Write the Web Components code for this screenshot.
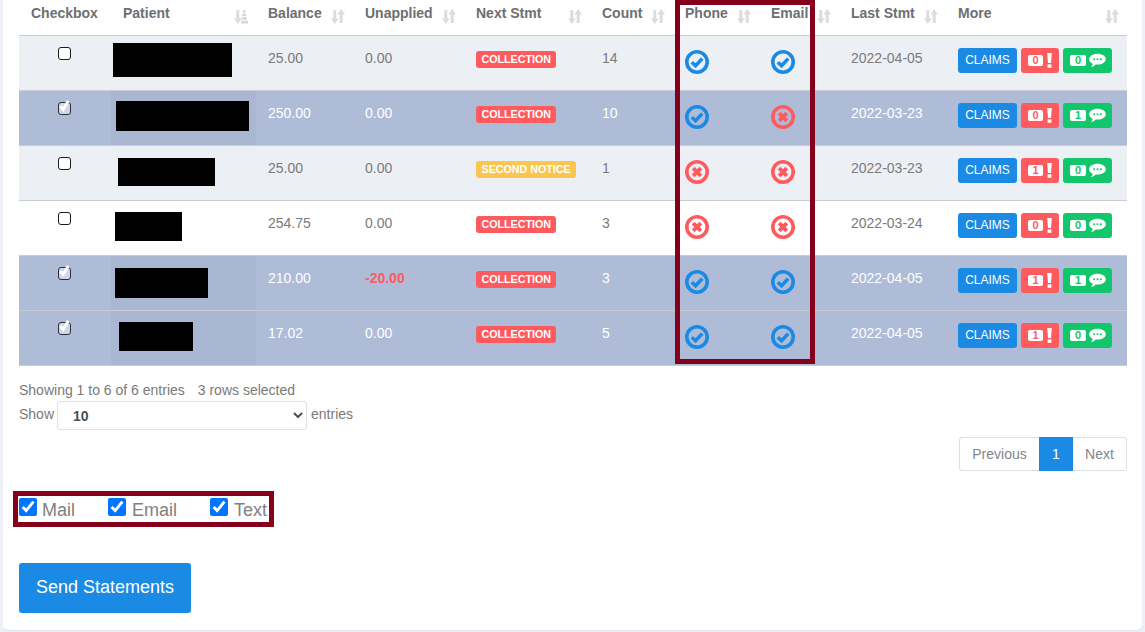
<!DOCTYPE html>
<html lang="en"><head><meta charset="utf-8"><title>Statements</title>
<style>
html,body{margin:0;height:632px;overflow:hidden;background:#edf1f7;font:14px/20px "Liberation Sans",Arial,sans-serif;color:#7a7a7a}
</style></head><body>
<x-card>
  <x-table>
    <x-row head>
      <x-head>Checkbox</x-head><x-head icon="amount">Patient</x-head><x-head icon>Balance</x-head><x-head icon>Unapplied</x-head><x-head icon>Next Stmt</x-head><x-head icon>Count</x-head><x-head icon>Phone</x-head><x-head icon>Email</x-head><x-head icon>Last Stmt</x-head><x-head icon>More</x-head>
    </x-row>
    <x-row shade>
      <x-cell center><x-tick></x-tick></x-cell><x-cell flush sorted><x-redact style="--l:2px;--t:7px;--w:119px;--h:34px"></x-redact></x-cell><x-cell>25.00</x-cell><x-cell>0.00</x-cell><x-cell><x-label>COLLECTION</x-label></x-cell><x-cell>14</x-cell><x-cell><x-status ok></x-status></x-cell><x-cell><x-status ok></x-status></x-cell><x-cell>2022-04-05</x-cell><x-cell><x-actions alerts="0" notes="0"></x-actions></x-cell>
    </x-row>
    <x-row selected>
      <x-cell center><x-tick checked></x-tick></x-cell><x-cell flush sorted><x-redact style="--l:5px;--t:10px;--w:133px;--h:30px"></x-redact></x-cell><x-cell>250.00</x-cell><x-cell>0.00</x-cell><x-cell><x-label>COLLECTION</x-label></x-cell><x-cell>10</x-cell><x-cell><x-status ok></x-status></x-cell><x-cell><x-status></x-status></x-cell><x-cell>2022-03-23</x-cell><x-cell><x-actions alerts="0" notes="1"></x-actions></x-cell>
    </x-row>
    <x-row shade>
      <x-cell center><x-tick></x-tick></x-cell><x-cell flush sorted><x-redact style="--l:7px;--t:12px;--w:97px;--h:28px"></x-redact></x-cell><x-cell>25.00</x-cell><x-cell>0.00</x-cell><x-cell><x-label warn>SECOND NOTICE</x-label></x-cell><x-cell>1</x-cell><x-cell><x-status></x-status></x-cell><x-cell><x-status></x-status></x-cell><x-cell>2022-03-23</x-cell><x-cell><x-actions alerts="1" notes="0"></x-actions></x-cell>
    </x-row>
    <x-row>
      <x-cell center><x-tick></x-tick></x-cell><x-cell flush sorted><x-redact style="--l:4px;--t:11px;--w:67px;--h:29px"></x-redact></x-cell><x-cell>254.75</x-cell><x-cell>0.00</x-cell><x-cell><x-label>COLLECTION</x-label></x-cell><x-cell>3</x-cell><x-cell><x-status></x-status></x-cell><x-cell><x-status></x-status></x-cell><x-cell>2022-03-24</x-cell><x-cell><x-actions alerts="0" notes="0"></x-actions></x-cell>
    </x-row>
    <x-row selected>
      <x-cell center><x-tick checked></x-tick></x-cell><x-cell flush sorted><x-redact style="--l:4px;--t:12px;--w:93px;--h:30px"></x-redact></x-cell><x-cell>210.00</x-cell><x-cell><b style="color:#ff5b5f">-20.00</b></x-cell><x-cell><x-label>COLLECTION</x-label></x-cell><x-cell>3</x-cell><x-cell><x-status ok></x-status></x-cell><x-cell><x-status ok></x-status></x-cell><x-cell>2022-04-05</x-cell><x-cell><x-actions alerts="1" notes="1"></x-actions></x-cell>
    </x-row>
    <x-row selected>
      <x-cell center><x-tick checked></x-tick></x-cell><x-cell flush sorted><x-redact style="--l:8px;--t:11px;--w:74px;--h:29px"></x-redact></x-cell><x-cell>17.02</x-cell><x-cell>0.00</x-cell><x-cell><x-label>COLLECTION</x-label></x-cell><x-cell>5</x-cell><x-cell><x-status ok></x-status></x-cell><x-cell><x-status ok></x-status></x-cell><x-cell>2022-04-05</x-cell><x-cell><x-actions alerts="1" notes="0"></x-actions></x-cell>
    </x-row>
  </x-table>
  <x-table-footer></x-table-footer>
  <x-channels></x-channels>
  <x-send>Send Statements</x-send>
</x-card>
<script>
function def(name, css, html){
  customElements.define(name, class extends HTMLElement{
    connectedCallback(){
      if(this.shadowRoot) return;
      const r=this.attachShadow({mode:'open'});
      r.innerHTML='<style>'+css+'</style>'+(typeof html==='function'?html(this):html);
    }
  });
}
const COLS='92px 145px 97px 111px 126px 83px 86px 80px 107px 181px';
def('x-card',`:host{display:block;box-sizing:border-box;width:1139px;height:630px;margin-left:3px;padding:0 15px 0 16px;background:#fff;border-radius:0 0 5px 5px;box-shadow:0 1px 1px rgba(0,0,0,.06)}`,'<slot></slot>');
def('x-table',`:host{display:block;position:relative;border-bottom:1px solid #c9cdd1}
.frame{position:absolute;left:656px;top:0;width:130px;height:354px;border:5px solid #85001a;pointer-events:none}`,'<slot></slot><div class="frame"></div>');
def('x-row',`:host{display:grid;grid-template-columns:${COLS};height:55px;box-sizing:border-box;border-top:1px solid #c9cdd1;--sort:transparent}
:host([head]){height:35px;border-top:0;background:#fff}
:host([shade]){background:#ecf0f5}
:host([selected]){background:#aebcd8;color:#fff;--sort:#a9b7d3}`,'<slot></slot>');
def('x-cell',`:host{display:block;padding:12px 12px 0;min-width:0}
:host([sorted]){background:var(--sort)}
:host([flush]){padding:0}
:host([center]){padding:11px 1px 0 0;display:flex;justify-content:center;align-items:flex-start}`,'<slot></slot>');
def('x-head',`:host{display:flex;justify-content:space-between;padding:3px 8px 0 12px;font-weight:700;color:#6c6f73;white-space:nowrap}
svg{width:14px;height:15px;margin-top:6px;flex:none}`,
h=>{const a=h.getAttribute('icon');if(a===null)return '<slot></slot>';
 const down='<path d="M3.8 1v10" stroke="#dcdcdc" stroke-width="3"/><path d="M0 9.6h7.6L3.8 15z" fill="#dcdcdc"/>';
 const right=a==='amount'
  ?'<g fill="#d8d8d8"><rect x="9" y="1" width="2.4" height="2.6"/><rect x="8.2" y="4.6" width="4" height="2.6"/><rect x="7.6" y="8.2" width="5.4" height="2.6"/><rect x="7" y="11.8" width="7" height="2.8"/></g>'
  :'<path d="M10.2 14V4" stroke="#dcdcdc" stroke-width="3"/><path d="M6.4 5.4h7.6L10.2 0z" fill="#dcdcdc"/>';
 return '<slot></slot><svg viewBox="0 0 14 15">'+down+right+'</svg>';});
def('x-tick',`:host{display:block;width:13px;height:13px;box-sizing:border-box;border:1.5px solid #1b1b1b;border-radius:3px;background:#fff;position:relative}
:host([checked]){background:#cfd6e6;border-color:#2b2f3a}
svg{position:absolute;left:-1px;top:-4px;width:13px;height:14px;overflow:visible}`,
h=>h.hasAttribute('checked')?'<svg viewBox="0 0 13 14"><path d="M2.4 7.2 5.2 10.5 10.3 1.8" fill="none" stroke="#fff" stroke-width="3"/></svg>':'');
def('x-redact',`:host{display:block;margin:var(--t) 0 0 var(--l);width:var(--w);height:var(--h);background:#000}`,'');
def('x-label',`:host{display:inline-block;vertical-align:top;margin-top:3px;height:17px;line-height:16px;padding:0 5.5px;background:#ff5b5f;color:#fff;font-size:10.7px;font-weight:700;border-radius:3px;white-space:nowrap}
:host([warn]){background:#fac64f}`,'<slot></slot>');
def('x-status',`:host{display:block;width:24px;height:24px;margin-top:2px}svg{display:block}`,
h=>h.hasAttribute('ok')
 ?'<svg width="24" height="24" viewBox="0 0 24 24"><circle cx="12" cy="12" r="10.2" fill="none" stroke="#1a8ae4" stroke-width="3.6"/><path d="M6.8 12.2 10.6 15.8 17.2 8.6" fill="none" stroke="#1a8ae4" stroke-width="3.6"/></svg>'
 :'<svg width="24" height="24" viewBox="0 0 24 24"><circle cx="12" cy="12" r="10.2" fill="none" stroke="#ff5b5f" stroke-width="3.6"/><path d="M8.2 8.2 15.8 15.8M15.8 8.2 8.2 15.8" fill="none" stroke="#ff5b5f" stroke-width="4"/></svg>');
def('x-actions',`:host{display:flex;gap:4px;width:160px}
.b{height:25px;box-sizing:border-box;border-radius:3px;display:flex;align-items:center;color:#fff;font-size:12px}
.c{width:59px;justify-content:center;background:#1a8ae4;padding-bottom:2px}
.a{width:38px;padding-left:7px;background:#ff5b5f;gap:4px}
.n{width:49px;padding-left:7px;background:#11c66b;gap:3px}
.k{display:block;background:#fff;border-radius:2px;height:11px;line-height:11px;font-size:11px;font-weight:700;text-align:center}
.a .k{width:15px;color:#ff5b5f}.n .k{width:16px;color:#11c66b}
svg{display:block}`,
h=>`<div class="b c">CLAIMS</div><div class="b a"><span class="k">${h.getAttribute('alerts')}</span><svg width="5" height="15" viewBox="0 0 5 15"><path d="M.2 0h4.6L4 10H1z" fill="#fff"/><rect x=".6" y="11.4" width="3.8" height="3.4" fill="#fff"/></svg></div><div class="b n"><span class="k">${h.getAttribute('notes')}</span><svg width="17" height="15" viewBox="0 0 17 15"><path d="M8.5 0.8C13 .8 16.8 3.1 16.8 6.2S13 11.6 8.5 11.6C7.8 11.6 7.2 11.5 6.6 11.5 5.6 12.8 3.8 13.8 1.8 14 3 13 3.6 11.9 3.7 10.8 1.6 9.8.2 8.1.2 6.2.2 3.1 4 .8 8.5.8Z" fill="#fff"/><g fill="#11c66b"><circle cx="5.2" cy="6.2" r="1"/><circle cx="8.5" cy="6.2" r="1"/><circle cx="11.8" cy="6.2" r="1"/></g></svg></div>`);
def('x-table-footer',`:host{display:block;color:#7a7a7a}
.info{display:flex;gap:13px;margin-top:14px}
.len{display:flex;align-items:flex-start;gap:3px;margin-top:1px}
.len span{margin-top:3px}
.len span:last-child{margin-left:1px}
select{width:250px;height:29px;box-sizing:border-box;padding:0 11px;border:1px solid #dcdfe3;border-radius:3px;background:#fff;color:#495057;font:700 14px "Liberation Sans",Arial,sans-serif}
.pg{display:flex;justify-content:flex-end;margin-top:7px}
.pg div{height:34px;box-sizing:border-box;line-height:32px;border:1px solid #dcdfe3;text-align:center}
.p{width:80px;border-right:0!important;border-radius:3px 0 0 3px;color:#7f868c}
.o{width:34px;background:#1a8ae4;border-color:#1a8ae4!important;color:#fff}
.x{width:54px;border-left:0!important;border-radius:0 3px 3px 0;color:#7f868c}`,
`<div class="info"><span>Showing 1 to 6 of 6 entries</span><span>3 rows selected</span></div>
<div class="len"><span>Show</span><select><option>10</option></select><span>entries</span></div>
<div class="pg"><div class="p">Previous</div><div class="o">1</div><div class="x">Next</div></div>`);
def('x-channels',`:host{display:block;box-sizing:border-box;width:261px;height:36px;margin:20px 0 0 -6px;border:5px solid #85001a;padding-left:1px;color:#808080;font-size:18px;line-height:21px}
.w{display:flex}
label{display:flex;align-items:flex-start;padding-top:2px}
input{width:18px;height:18px;margin:0 5px 0 0;flex:none;accent-color:#0075ff}
span{margin-top:2px}
.s{margin-left:1px}`,
`<div class="w"><label style="width:89px"><input type="checkbox" checked><span>Mail</span></label><label style="width:102px"><input type="checkbox" checked><span class="s">Email</span></label><label><input type="checkbox" checked><span class="s">Text</span></label></div>`);
def('x-send',`:host{display:block;width:172px;height:50px;margin-top:36px;background:#1a8ae4;color:#fff;font-size:18px;line-height:48px;text-align:center;border-radius:3px}`,'<slot></slot>');
</script>
</body></html>
